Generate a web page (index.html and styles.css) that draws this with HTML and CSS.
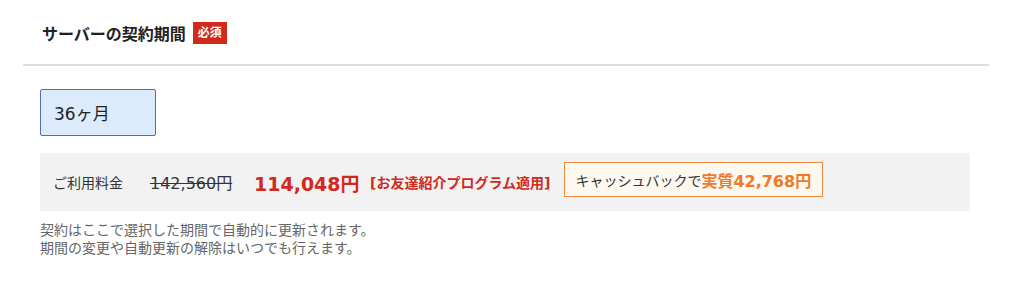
FILE: index.html
```html
<!DOCTYPE html>
<html lang="ja">
<head>
    <meta charset="UTF-8">
    <meta name="viewport" content="width=device-width, initial-scale=1.0">
    <title>サーバーの契約期間</title>
    <link rel="stylesheet" href="styles.css">
</head>
<body>
    <div class="section">
        <div class="head">
            <span class="headTitle">サーバーの契約期間</span>
            <span class="required">必須</span>
        </div>
        <div class="body">
            <div class="term selected">36ヶ月</div>
            <div class="price">
                <span class="priceLabel">ご利用料金</span>
                <span class="oldPrice">142,560円</span>
                <span class="newPrice">114,048円</span>
                <span class="campaign">[お友達紹介プログラム適用]</span>
                <span class="cashback">キャッシュバックで<b>実質42,768円</b></span>
            </div>
            <p class="note">契約はここで選択した期間で自動的に更新されます。<br>期間の変更や自動更新の解除はいつでも行えます。</p>
        </div>
    </div>
</body>
</html>
```

FILE: styles.css
```css
* {
    box-sizing: border-box;
}
body {
    margin: 0;
    font-family: "DejaVu Sans", "Noto Sans CJK JP", sans-serif;
    color: #333;
    background: #fff;
}
.section {
    padding: 0 35px 0 23px;
}
.head {
    display: flex;
    align-items: center;
    height: 66px;
    padding-left: 19px;
    padding-top: 1px;
    border-bottom: 2px solid #dcdcdc;
}
.headTitle {
    font-size: 16px;
    font-weight: bold;
    color: #222;
}
.required {
    margin-left: 7px;
    background: #d1291b;
    color: #fff;
    font-size: 12px;
    font-weight: bold;
    padding: 3px 5px;
    line-height: 16px;
}
.body {
    padding: 23px 19px 0 17px;
}
.term {
    width: 116px;
    height: 47px;
    display: flex;
    align-items: center;
    padding-left: 13px;
    font-size: 17px;
    color: #222;
    border: 1px solid #4a72ad;
    border-radius: 2px;
    background: #dcebfb;
}
.price {
    display: flex;
    align-items: center;
    margin-top: 17px;
    height: 58px;
    padding-left: 13px;
    background: #f2f2f2;
}
.priceLabel {
    font-size: 14px;
    width: 97px;
}
.oldPrice {
    font-size: 16px;
    text-decoration: line-through;
    width: 104px;
}
.newPrice {
    font-size: 19px;
    font-weight: bold;
    color: #d1291b;
    width: 116px;
}
.campaign {
    font-size: 14px;
    font-weight: bold;
    color: #d1291b;
}
.cashback {
    margin-left: 14px;
    margin-bottom: 5px;
    display: flex;
    align-items: center;
    height: 35px;
    padding: 0 11px 0 10px;
    font-size: 14px;
    border: 1px solid #f08a3c;
    background: #fdf8f0;
}
.cashback b {
    color: #ef7a2a;
    font-size: 16px;
}
.note {
    margin: 10px 0 0;
    font-size: 14px;
    line-height: 18px;
    color: #666;
}
```
